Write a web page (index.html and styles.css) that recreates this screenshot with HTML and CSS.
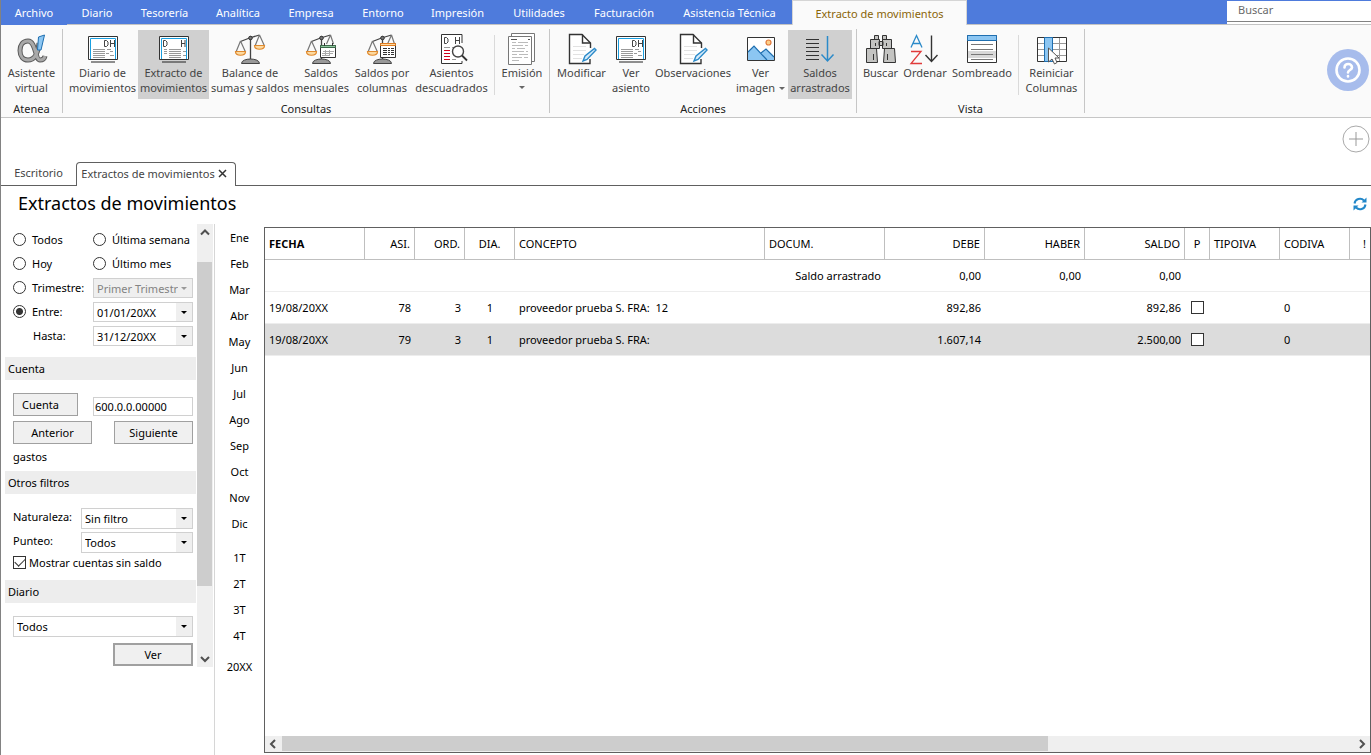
FILE: index.html
```html
<!DOCTYPE html>
<html lang="es">
<head>
<meta charset="utf-8">
<title>Extractos de movimientos</title>
<link rel="stylesheet" href="styles.css">
</head>
<body>
<svg class="defs" aria-hidden="true">
  <symbol id="scales" viewBox="0 0 32 32">
    <path d="M16.500 3v23M6.500 8.500l9-3.500 10-3" fill="none" stroke="#444" stroke-width="1.300"/>
    <path d="M6.500 8L2 19M6.500 8l5 11M25.500 2L21 13M25.500 2l5 11" fill="none" stroke="#777" stroke-width="1.200"/>
    <circle cx="16.500" cy="5" r="1.800" fill="#777" stroke="#333"/>
    <path d="M1.500 18.500h10c0 5-10 5-10 0zM20.500 12.500h10c0 5-10 5-10 0z" fill="#fcd9a0" stroke="#e08a2e" stroke-width="1.200"/>
    <path d="M7.500 30.500c0-6 18-6 18 0z" fill="#999" stroke="#444"/>
  </symbol>
  <symbol id="scales-left" viewBox="0 0 32 32">
    <path d="M16.500 3v23M6.500 8.500l9-3.500 10-3" fill="none" stroke="#444" stroke-width="1.300"/>
    <path d="M6.500 8L2 19M6.500 8l5 11M25.500 2l-4 9M25.500 2l3 9" fill="none" stroke="#777" stroke-width="1.200"/>
    <circle cx="16.500" cy="5" r="1.800" fill="#777" stroke="#333"/>
    <path d="M1.500 18.500h10c0 5-10 5-10 0z" fill="#fcd9a0" stroke="#e08a2e" stroke-width="1.200"/>
    <path d="M7.500 30.500c0-6 18-6 18 0z" fill="#999" stroke="#444"/>
  </symbol>
  <symbol id="note-pen" viewBox="0 0 32 32">
    <path d="M24 26v4.500H3.500v-29H16l8.500 8.500v5" fill="#fff" stroke="#333" stroke-width="1.400"/>
    <path d="M16.500 1.500V10h8" fill="none" stroke="#333" stroke-width="1.400"/>
    <path d="M7 13.500h13M7 17.500h13M7 21.500h11M7 25.500h9" stroke="#e2e2e2"/>
    <path d="M17 28l2-5 9.500-7.500 1.500 1.500-9 9.500z" fill="#d6ebfa" stroke="#2b8ac9" stroke-width="1.400"/>
  </symbol>
  <symbol id="entry" viewBox="0 0 32 32">
    <path d="M1.500 3.500h29v23h-29z" fill="#fff" stroke="#333"/>
    <path d="M3.500 26V5.500h25V26" fill="none" stroke="#1a9fe0"/>
    <path d="M4 29h24" stroke="#222"/>
    <path d="M17.500 7.500h2l1.500 1.500v3l-1.500 1.500h-2zM23.500 7v7M27.500 7v7M23.500 10.500h4" fill="none" stroke="#444"/>
    <path d="M6 16.500h12M20 16.500h4M6 18.500h12M6 20.500h12M19 20.500h3M23 18.500h3M6 22.500h12M23 22.500h4M6 24.500h12" stroke="#999"/>
  </symbol>
</svg>

<header>
  <nav class="menu" aria-label="Menú principal">
    <button class="menu-item menu-file">Archivo</button>
    <button class="menu-item">Diario</button>
    <button class="menu-item">Tesorería</button>
    <button class="menu-item">Analítica</button>
    <button class="menu-item">Empresa</button>
    <button class="menu-item">Entorno</button>
    <button class="menu-item">Impresión</button>
    <button class="menu-item">Utilidades</button>
    <button class="menu-item">Facturación</button>
    <button class="menu-item">Asistencia Técnica</button>
    <button class="menu-item menu-active">Extracto de movimientos</button>
    <div class="search"><input type="search" placeholder="Buscar" aria-label="Buscar"></div>
  </nav>

  <div class="ribbon">
    <section class="group">
      <div class="tools tools-atenea">
        <button class="tool">
          <svg class="icon" viewBox="0 0 32 32"><g fill="none"><path d="M23 10c-1 10-4 17-11 17-5 0-8-4-8-9.500S7 8 12 8c8 0 7 19 12 19 3 0 4.500-1.500 5-4" stroke="#5c5c5c" stroke-width="5"/><path d="M23 10c-1 10-4 17-11 17-5 0-8-4-8-9.500S7 8 12 8c8 0 7 19 12 19 3 0 4.500-1.500 5-4" stroke="#a9a9a9" stroke-width="3"/></g><path d="M22.500 4l6-2-3.500 15h-3.500z" fill="#8cc6f2" stroke="#1f6fb0"/></svg>
          <span>Asistente virtual</span></button>
      </div>
      <h2>Atenea</h2>
    </section>

    <section class="group">
      <div class="tools tools-consultas">
        <button class="tool"><svg class="icon"><use href="#entry"/></svg><span>Diario de movimientos</span></button>
        <button class="tool tool-on">
          <svg class="icon" viewBox="0 0 32 32"><path d="M1.500 3.500h29v23h-29z" fill="#fff" stroke="#333"/><path d="M3.500 26V5.500h25V26" fill="none" stroke="#1a9fe0"/><path d="M4 29h24" stroke="#222"/><path d="M5.500 7.500h2L9 9v3l-1.500 1.500h-2zM23.500 7v7M27 7v7M23.500 10.500H27" fill="none" stroke="#444"/><path d="M6 16.500h3M11 16.500h12M6 18.500h3M11 18.500h12M6 20.500h3M11 20.500h12M25 18.500h3M11 22.500h12M25 22.500h3M11 24.500h12" stroke="#999"/></svg>
          <span>Extracto de movimientos</span></button>
        <button class="tool"><svg class="icon"><use href="#scales"/></svg><span>Balance de sumas y saldos</span></button>
        <button class="tool">
          <svg class="icon" viewBox="0 0 32 32"><use href="#scales-left"/><path d="M15.500 12.500h15v12h-15z" fill="#fff" stroke="#333"/><path d="M15.500 12.500h15v2h-15z" fill="#8fc7a0" stroke="#3d6b4a"/><path d="M19.500 10v3M27.500 10v3" stroke="#333"/><path d="M18 18.500h11M17 20.500h11M17 22.500h8M20.500 17v6M24.500 17v6" stroke="#aaa"/></svg>
          <span>Saldos mensuales</span></button>
        <button class="tool">
          <svg class="icon" viewBox="0 0 32 32"><use href="#scales-left"/><path d="M14.500 10.500h15v14h-15z" fill="#fff" stroke="#333"/><path d="M14.500 10.500h15v2h-15z" fill="#fcd9a0" stroke="#e07a1e"/><path d="M17 15.500h4M17 17.500h4M17 19.500h4M17 21.500h4M22 15.500h2M22 17.500h2M22 19.500h2M22 21.500h2M25 15.500h3M25 17.500h3M25 19.500h3M25 21.500h3" stroke="#333"/></svg>
          <span>Saldos por columnas</span></button>
        <button class="tool">
          <svg class="icon" viewBox="0 0 32 32"><path d="M26 10V1.500H5.500v29H26V28" fill="#fff" stroke="#333"/><path d="M8.500 4.500h2L12 6v3l-1.500 1.500h-2zM19.500 4v7M23.500 4v7M19.500 7.500h4" fill="none" stroke="#444"/><path d="M8 14.500h6M16 14.500h2M16 26.500h4" stroke="#999"/><path d="M8 17.500h6M8 20.500h6M8 23.500h6M8 26.500h6" stroke="#d0021b"/><circle cx="22" cy="18.500" r="5.500" fill="#fff" stroke="#444" stroke-width="1.400"/><path d="M26 22.500l5 5" stroke="#333" stroke-width="1.800"/></svg>
          <span>Asientos descuadrados</span></button>
        <div class="rule"></div>
        <button class="tool">
          <svg class="icon" viewBox="0 0 32 32"><path d="M5.500.500h23v28h-23z" fill="#fff" stroke="#777"/><path d="M2.500 3.500h23v28h-23z" fill="#fff" stroke="#777"/><path d="M5 6.500h6M22 6.500h2" stroke="#555"/><path d="M6 9.500h4M12 9.500h10M6 12.500h11M19 12.500h3M6 15.500h3M11 15.500h8M6 18.500h12M20 18.500h2M6 21.500h5M13 21.500h9M6 24.500h10M18 24.500h4M6 27.500h7" stroke="#bbb"/></svg>
          <span>Emisión</span><i class="caret"></i></button>
      </div>
      <h2>Consultas</h2>
    </section>

    <section class="group">
      <div class="tools tools-acciones">
        <button class="tool"><svg class="icon"><use href="#note-pen"/></svg><span>Modificar</span></button>
        <button class="tool"><svg class="icon"><use href="#entry"/></svg><span>Ver<br>asiento</span></button>
        <button class="tool"><svg class="icon"><use href="#note-pen"/></svg><span>Observaciones</span></button>
        <button class="tool">
          <svg class="icon" viewBox="0 0 32 32"><path d="M2.500 4.500h27v23h-27z" fill="#fff" stroke="#333"/><path d="M3 19l6-6 13 14H3z" fill="#8cc6f2"/><path d="M16 20l5-4 8 8v3h-7z" fill="#8cc6f2"/><path d="M3 19l6-6 13 14M16 20l5-4 8 8" fill="none" stroke="#1f6fb0" stroke-width="1.200"/><circle cx="23.500" cy="9.500" r="2.500" fill="#fcd08a" stroke="#e07a3e" stroke-width="1.200"/></svg>
          <span>Ver<br>imagen <i class="caret caret-inline"></i></span></button>
        <button class="tool tool-on">
          <svg class="icon" viewBox="0 0 32 32"><path d="M2 6.500h13M2 10.500h13M2 14.500h13M2 18.500h13M2 22.500h13M2 26.500h13" stroke="#333"/><path d="M23.500 3v25M17.500 21.500l6 6.500 6-6.500" fill="none" stroke="#2b8ac9" stroke-width="1.500"/></svg>
          <span>Saldos arrastrados</span></button>
      </div>
      <h2>Acciones</h2>
    </section>

    <section class="group">
      <div class="tools tools-vista">
        <button class="tool">
          <svg class="icon" viewBox="0 0 32 32"><path d="M9.500 2.500h4v4h-4zM17.500 2.500h4v4h-4zM14 8.500h4v4h-4zM5.500 6.500h9v9h-9zM17.500 6.500h9v9h-9zM1.500 15.500h10l1 14h-11zM19.500 15.500h10l1 14h-12z" fill="#c4c4c2" stroke="#333"/><path d="M10.500 10v3M21.500 10v3M8.500 21v6M22.500 21v6" stroke="#333"/></svg>
          <span>Buscar</span></button>
        <button class="tool">
          <svg class="icon" viewBox="0 0 32 32"><path d="M2 14.500l5.500-12 5.500 12M4 10.500h7" fill="none" stroke="#2b8ac9" stroke-width="1.300"/><path d="M2 18.500h10L2 30.500h11" fill="none" stroke="#e03a3a" stroke-width="1.300"/><path d="M22.500 2.500v26M16.500 22l6 6.500 6-6.500" fill="none" stroke="#333" stroke-width="1.400"/></svg>
          <span>Ordenar</span></button>
        <button class="tool">
          <svg class="icon" viewBox="0 0 32 32"><path d="M1.500 2.500h29v27h-29z" fill="#fff" stroke="#333"/><path d="M2 18h28v7H2z" fill="#d8d8d8"/><path d="M1.500 2.500h29v5h-29z" fill="#8cc6f2" stroke="#1f6fb0"/><path d="M5 11.500h22M5 16.500h22M5 21.500h22M5 26.500h22" stroke="#777"/></svg>
          <span>Sombreado</span></button>
        <div class="rule"></div>
        <button class="tool">
          <svg class="icon" viewBox="0 0 32 32"><path d="M1.500 4.500h29v24h-29z" fill="#fff" stroke="#333"/><path d="M2 10.500h28M2 16.500h28M2 22.500h28M23.500 5v23" stroke="#999"/><path d="M8.500 4.500h8v24h-8z" fill="#8cc6f2" stroke="#1f6fb0"/><path d="M12.500 15v14l3.500-3 2.500 5 2.500-1.500-2-4.500h4z" fill="#fff" stroke="#555"/></svg>
          <span>Reiniciar Columnas</span></button>
      </div>
      <h2>Vista</h2>
    </section>

    <button class="help" aria-label="Ayuda">
      <svg viewBox="0 0 42 42"><circle cx="21" cy="21" r="21" fill="#a7bcec"/><g fill="none" stroke="#fff" stroke-width="2.600" stroke-linecap="round"><circle cx="21" cy="21" r="11.500"/><path d="M17.500 18.500c0-5 7.500-4.500 7.500 0 0 2.500-4 2.500-4 5M21 27v.500"/></g></svg>
    </button>
  </div>
</header>

<div class="tabbar">
  <button class="tab">Escritorio</button>
  <div class="tab tab-active"><span>Extractos de movimientos</span><button class="close" aria-label="Cerrar"><svg viewBox="0 0 9 9"><path d="M1 1l7 7M8 1L1 8" stroke="#333" stroke-width="1.500"/></svg></button></div>
  <button class="add" aria-label="Añadir"><svg viewBox="0 0 28 28"><circle cx="14" cy="14" r="13" fill="#fff" stroke="#aaa"/><path d="M14 7v14M7 14h14" stroke="#999"/></svg></button>
</div>

<div class="title">
  <h1>Extractos de movimientos</h1>
  <button class="refresh" aria-label="Actualizar"><svg viewBox="0 0 14 14"><path d="M1.500 6.500A5.500 5.500 0 0 1 11 3.500M12.500 7.500A5.500 5.500 0 0 1 3 10.500" fill="none" stroke="#2287c9" stroke-width="2"/><path d="M13.500.500v5h-5zM.500 13.500v-5h5z" fill="#2287c9"/></svg></button>
</div>

<main>
  <aside>
    <form class="filters">
      <div class="period">
        <label class="choice"><input type="radio" name="p">Todos</label>
        <label class="choice"><input type="radio" name="p">Última semana</label>
        <label class="choice"><input type="radio" name="p">Hoy</label>
        <label class="choice"><input type="radio" name="p">Último mes</label>
        <label class="choice"><input type="radio" name="p">Trimestre:</label>
        <div class="drop drop-off"><select disabled aria-label="Trimestre"><option>Primer Trimestr</option></select></div>
        <label class="choice"><input type="radio" name="p" checked>Entre:</label>
        <div class="drop"><select aria-label="Entre"><option>01/01/20XX</option></select></div>
        <label class="until" for="hasta">Hasta:</label>
        <div class="drop"><select id="hasta"><option>31/12/20XX</option></select></div>
      </div>

      <h2 class="bar">Cuenta</h2>
      <div class="account">
        <button type="button" class="btn btn-account">Cuenta</button>
        <input class="code" type="text" value="600.0.0.00000" aria-label="Cuenta">
        <button type="button" class="btn btn-step">Anterior</button>
        <button type="button" class="btn btn-step">Siguiente</button>
        <p>gastos</p>
      </div>

      <h2 class="bar">Otros filtros</h2>
      <div class="others">
        <label for="nat">Naturaleza:</label>
        <div class="drop"><select id="nat"><option>Sin filtro</option></select></div>
        <label for="pun">Punteo:</label>
        <div class="drop"><select id="pun"><option>Todos</option></select></div>
        <label class="check"><input type="checkbox" checked>Mostrar cuentas sin saldo</label>
      </div>

      <h2 class="bar">Diario</h2>
      <div class="journal">
        <div class="drop"><select aria-label="Diario"><option>Todos</option></select></div>
        <button type="button" class="btn btn-view">Ver</button>
      </div>
    </form>
    <div class="vscroll">
      <svg class="arrow" viewBox="0 0 16 16"><path d="M4 10.500l4-4 4 4" fill="none" stroke="#505050" stroke-width="2"/></svg>
      <div class="thumb"></div>
      <svg class="arrow" viewBox="0 0 16 16"><path d="M4 6l4 4 4-4" fill="none" stroke="#505050" stroke-width="2"/></svg>
    </div>
  </aside>

  <nav class="months" aria-label="Periodo">
    <button>Ene</button><button>Feb</button><button>Mar</button><button>Abr</button><button>May</button><button>Jun</button><button>Jul</button><button>Ago</button><button>Sep</button><button>Oct</button><button>Nov</button><button>Dic</button>
    <button class="quarter">1T</button><button>2T</button><button>3T</button><button>4T</button>
    <button class="year">20XX</button>
  </nav>

  <div class="grid">
    <table>
      <colgroup><col class="c-date"><col class="c-s"><col class="c-s"><col class="c-s"><col class="c-text"><col class="c-doc"><col class="c-num"><col class="c-num"><col class="c-num"><col class="c-p"><col class="c-tax"><col class="c-tax"><col></colgroup>
      <thead>
        <tr><th class="sorted">FECHA</th><th class="r">ASI.</th><th class="r">ORD.</th><th class="c">DIA.</th><th>CONCEPTO</th><th>DOCUM.</th><th class="r">DEBE</th><th class="r">HABER</th><th class="r">SALDO</th><th class="c">P</th><th>TIPOIVA</th><th>CODIVA</th><th class="r">!</th></tr>
      </thead>
      <tbody>
        <tr><td></td><td></td><td></td><td></td><td></td><td class="r">Saldo arrastrado</td><td class="r">0,00</td><td class="r">0,00</td><td class="r">0,00</td><td></td><td></td><td></td><td></td></tr>
        <tr><td>19/08/20XX</td><td class="r">78</td><td class="r">3</td><td class="c">1</td><td>proveedor prueba S. FRA:&nbsp; 12</td><td></td><td class="r">892,86</td><td></td><td class="r">892,86</td><td class="c"><input type="checkbox" aria-label="Punteado 78"></td><td></td><td>0</td><td></td></tr>
        <tr class="selected"><td>19/08/20XX</td><td class="r">79</td><td class="r">3</td><td class="c">1</td><td>proveedor prueba S. FRA:</td><td></td><td class="r">1.607,14</td><td></td><td class="r">2.500,00</td><td class="c"><input type="checkbox" aria-label="Punteado 79"></td><td></td><td>0</td><td></td></tr>
      </tbody>
    </table>
    <div class="hscroll">
      <svg class="arrow" viewBox="0 0 16 16"><path d="M10 4L6 8l4 4" fill="none" stroke="#505050" stroke-width="2"/></svg>
      <div class="track"><div class="hthumb"></div></div>
      <svg class="arrow" viewBox="0 0 16 16"><path d="M6 4l4 4-4 4" fill="none" stroke="#505050" stroke-width="2"/></svg>
    </div>
  </div>
</main>
</body>
</html>
```

FILE: styles.css
```css
* { box-sizing: border-box; }
html { height: 100%; }
body {
  margin: 0;
  min-height: 100%;
  display: flex;
  flex-direction: column;
  border-left: 1px solid #828282;
  background: #fff;
  color: #000;
  font-family: "Noto Sans", "Open Sans", sans-serif;
  font-size: 11px;
  line-height: 15px;
}
button, input, select { font: inherit; color: inherit; margin: 0; }
button { border: 0; background: none; padding: 0; }
h1, h2, p { margin: 0; font-weight: 400; font-size: inherit; }
.defs { position: absolute; width: 0; height: 0; }

/* menu */
.menu {
  display: grid;
  grid-template-columns: 66px 60px 75px 72px 74px 70px 79px 84px 86px 125px 175px 1fr 144px;
  height: 25px;
  background: #4e7bdc;
}
.menu-item { color: #fff; white-space: nowrap; border-bottom: 1px solid #c3c3c3; }
.menu-file { border-bottom-color: #4e7bdc; }
.menu-active {
  background: #fafafa;
  color: #8a6508;
  border: 1px solid #d5d5d5;
  border-bottom: 0;
}
.search {
  grid-column: 12 / 14;
  display: flex;
  justify-content: flex-end;
  border-bottom: 1px solid #c3c3c3;
}
.search input {
  width: 144px;
  height: 21px;
  margin-top: 1px;
  padding: 0 11px 3px;
  border: 0;
  border-bottom: 1px solid #828282;
  border-radius: 0;
  background: #fff;
  outline: 0;
  box-shadow: 0 2px #fff;
  appearance: none;
}
.search input::placeholder { color: #6a6a6a; opacity: 1; }

/* ribbon */
.ribbon {
  display: flex;
  height: 93px;
  background: #fafafa;
  border-bottom: 1px solid #c6c6c6;
  color: #444;
}
.group {
  display: flex;
  flex-direction: column;
  margin: 4px 0;
  border-right: 1px solid #c6c6c6;
}
.group h2 { text-align: center; color: #222; margin-top: 2px; }
.tools { display: grid; flex: none; height: 69px; margin-top: 1px; }
.tools-atenea { grid-template-columns: 61px; }
.tools-consultas { grid-template-columns: 71px 71px 82px 60px 62px 77px 9px 46px; padding: 0 4px; }
.tools-acciones { grid-template-columns: 55px 44px 80px 55px 64px; padding: 0 4px; }
.tools-vista { grid-template-columns: 41px 48px 66px 7px 59px; padding: 0 3px; }
.tool {
  display: flex;
  flex-direction: column;
  align-items: center;
  padding-top: 3px;
  white-space: normal;
  line-height: 15px;
}
.tool-on { background: #d0d0d0; }
.icon { width: 32px; height: 32px; flex: none; }
.rule { justify-self: center; width: 1px; height: 60px; margin-top: 5px; background: #dadada; }
.caret {
  width: 0;
  margin-top: 6px;
  border: 3px solid transparent;
  border-top-color: #666;
  border-bottom: 0;
}
.caret-inline { display: inline-block; margin: 0 0 2px 1px; }
.help { width: 42px; height: 42px; margin: 24px 2px 0 auto; }
.help svg, .add svg, .refresh svg, .close svg { display: block; width: 100%; height: 100%; }

/* document tabs */
.tabbar {
  display: flex;
  align-items: flex-end;
  position: relative;
  height: 68px;
  border-bottom: 1px solid #606060;
  color: #444;
}
.tab { height: 23px; width: 75px; padding-bottom: 2px; }
.tab-active {
  display: flex;
  align-items: center;
  justify-content: center;
  gap: 3px;
  width: 160px;
  height: 24px;
  margin-bottom: -1px;
  padding: 0 4px 3px 0;
  border: 1px solid #606060;
  border-bottom: 0;
  border-radius: 4px 4px 0 0;
  background: #fff;
  white-space: nowrap;
}
.close { width: 9px; height: 9px; }
.add { width: 28px; height: 28px; margin-left: auto; margin-right: 1px; align-self: flex-start; margin-top: 7px; }

.title {
  display: flex;
  align-items: center;
  justify-content: space-between;
  height: 36px;
  padding: 0 4px 0 17px;
}
.title h1 { font-size: 18px; line-height: 24px; padding-bottom: 2px; }
.refresh { width: 14px; height: 14px; }

/* body */
main { flex: 1; display: flex; margin-top: 2px; }
aside { display: flex; align-items: flex-start; width: 214px; flex: none; border-right: 1px solid #d6d6d6; }
.filters { width: 195px; flex: none; padding-left: 4px; }
.period {
  display: grid;
  grid-template-columns: 80px 100px;
  grid-auto-rows: 24px;
  align-items: center;
  padding: 4px 0 9px 8px;
}
.choice { display: flex; align-items: center; gap: 6px; padding-bottom: 2px; white-space: nowrap; }
.until { padding: 0 0 2px 20px; }
input[type="radio"], input[type="checkbox"] {
  appearance: none;
  flex: none;
  width: 13px;
  height: 13px;
  border: 1px solid #333;
  background: #fff;
}
input[type="radio"] { border-radius: 50%; }
input[type="radio"]:checked { background: radial-gradient(#333 3px, #fff 4px); }

.drop { position: relative; height: 20px; border: 1px solid #d0d0d0; background: #fff; }
.drop select {
  appearance: none;
  display: block;
  width: 100%;
  height: 100%;
  padding: 0 14px 0 3px;
  border: 0;
  border-radius: 0;
  background: linear-gradient(#efefef, #efefef) right / 16px 100% no-repeat;
  outline: 0;
}
.drop::after {
  content: "";
  position: absolute;
  right: 5px;
  top: 8px;
  border: 3px solid transparent;
  border-top-color: #000;
  border-bottom: 0;
  pointer-events: none;
}
.drop-off { background: #efefef; }
.drop-off select { color: #838383; opacity: 1; }
.drop-off::after { border-top-color: #999; }

.bar { height: 23px; line-height: 23px; padding-left: 3px; background: #ededed; }
.btn { height: 23px; border: 1px solid #a0a0a0; background: #f0f0f0; }
.account {
  display: flex;
  flex-wrap: wrap;
  justify-content: space-between;
  row-gap: 5px;
  width: 188px;
  padding: 13px 0 7px 8px;
}
.btn-account { width: 65px; padding-right: 10px; }
.code { width: 100px; height: 19px; margin-top: 4px; padding: 0 1px; border: 1px solid #d0d0d0; border-radius: 0; }
.btn-step { width: 79px; }
.account p { width: 100%; }

.others {
  display: grid;
  grid-template-columns: 68px 112px;
  row-gap: 3px;
  padding: 14px 0 11px 8px;
}
.others label { padding-top: 1px; }
.others .drop, .journal .drop { height: 21px; }
.others .check { grid-column: 1 / 3; display: flex; align-items: center; gap: 3px; padding: 0; line-height: 13px; }
.check input { display: grid; place-items: center; }
.check input:checked::before {
  content: "";
  width: 9px;
  height: 5px;
  margin-bottom: 3px;
  border: solid #333;
  border-width: 0 0 1px 1px;
  transform: rotate(-45deg);
}
.journal { display: flex; flex-direction: column; gap: 6px; padding: 13px 3px 0 8px; }
.btn-view { align-self: flex-end; width: 80px; border-width: 2px; }

.vscroll { display: flex; flex-direction: column; width: 16px; height: 443px; margin-left: 1px; background: #efefef; }
.arrow { width: 16px; height: 16px; flex: none; }
.thumb { width: 15px; height: 324px; margin: 22px 0 auto; background: #cdcdcd; }

.months { display: flex; flex-direction: column; width: 49px; flex: none; }
.months button { height: 26px; }
.months .quarter { margin-top: 8px; }
.months .year { margin-top: 5px; }

/* entries */
.grid {
  flex: 1;
  min-width: 0;
  display: flex;
  flex-direction: column;
  justify-content: space-between;
  margin: 3px 0 2px;
  border: 1px solid #606060;
}
table { width: 100%; table-layout: fixed; border-collapse: separate; border-spacing: 0; }
th, td { height: 32px; padding: 0 4px; text-align: left; white-space: nowrap; font-weight: 400; }
th { border-right: 1px solid #bfbfbf; border-bottom: 1px solid #bfbfbf; }
th:last-child { border-right: 0; }
td { border-bottom: 1px solid #ededed; }
.sorted { font-weight: 700; }
.r { text-align: right; }
.c { text-align: center; }
.selected { background: #dcdcdc; }
td input { display: block; margin: auto; }
.c-date, .c-num { width: 100px; }
.c-s { width: 50px; }
.c-text { width: 250px; }
.c-doc { width: 120px; }
.c-p { width: 25px; }
.c-tax { width: 70px; }
.hscroll { display: flex; height: 16px; background: #efefef; }
.track { flex: 1; display: grid; grid-template-columns: 5fr 2fr; padding-left: 1px; }
.hthumb { height: 15px; background: #cdcdcd; }
```
